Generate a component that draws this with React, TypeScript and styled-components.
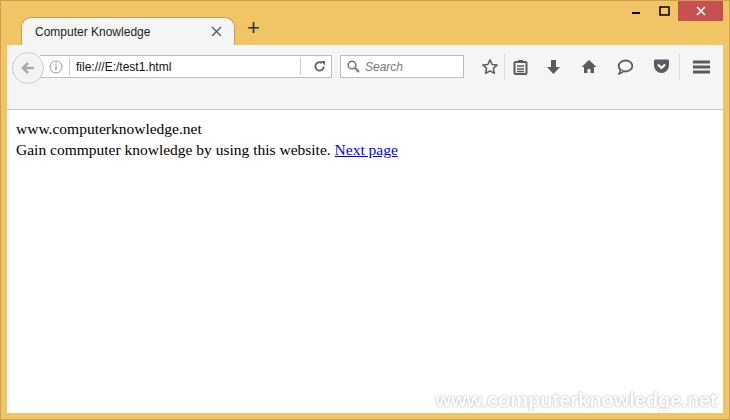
import styled, { createGlobalStyle } from 'styled-components'

const Global = createGlobalStyle`
  html, body { margin: 0; padding: 0; }
  body { width: 730px; height: 420px; overflow: hidden; font-family: "Liberation Sans", Arial, sans-serif; }
`

const Frame = styled.div`
  width: 730px;
  height: 420px;
  box-sizing: border-box;
  background: #f1c566;
  border: 1px solid #c9a250;
  display: flex;
  flex-direction: column;
  padding: 0 6px 6px 6px;
`

const TitleBar = styled.div`
  height: 44px;
  display: flex;
  align-items: flex-end;
  position: relative;
`

const Tab = styled.div`
  margin-left: 14px;
  width: 214px;
  height: 28px;
  background: #f5f5f5;
  border: 1px solid #c9a250;
  border-bottom: none;
  border-radius: 10px 10px 0 0;
  box-sizing: border-box;
  display: flex;
  align-items: center;
  padding: 0 12px 0 13px;
  font-size: 12px;
  color: #222;
`

const TabTitle = styled.span`
  flex: 1;
`

const NewTab = styled.div`
  margin: 0 0 6px 12px;
  font-size: 22px;
  line-height: 22px;
  color: #333;
`

const Controls = styled.div`
  position: absolute;
  top: 0;
  right: 0;
  display: flex;
  align-items: center;
`

const Ctl = styled.div<{ $close?: boolean }>`
  width: ${({ $close }) => ($close ? '45px' : '28px')};
  height: 20px;
  display: flex;
  align-items: center;
  justify-content: center;
  background: ${({ $close }) => ($close ? '#c75050' : 'transparent')};
  color: ${({ $close }) => ($close ? '#fff' : '#000')};
  font-size: 12px;
`

const Toolbar = styled.div`
  height: 65px;
  background: #f5f5f5;
  border-bottom: 1px solid #c8c8c8;
  display: flex;
  align-items: flex-start;
  padding: 10px 0 0 5px;
  box-sizing: border-box;
`

const Back = styled.div`
  width: 30px;
  height: 30px;
  border-radius: 50%;
  border: 1px solid #ccc;
  background: #f3f3f3;
  display: flex;
  align-items: center;
  justify-content: center;
  z-index: 1;
  margin-top: -3px;
`

const UrlBar = styled.div`
  width: 292px;
  height: 23px;
  margin-left: -4px;
  background: #fff;
  border: 1px solid #bdbdbd;
  border-left: none;
  box-sizing: border-box;
  display: flex;
  align-items: center;
  font-size: 12px;
  color: #111;
  padding-left: 9px;
`

const Divider = styled.div`
  width: 1px;
  height: 17px;
  background: #ccc;
  margin: 0 6px;
`

const Url = styled.span`
  flex: 1;
`

const Search = styled.div`
  width: 124px;
  height: 23px;
  margin-left: 8px;
  background: #fff;
  border: 1px solid #bdbdbd;
  box-sizing: border-box;
  display: flex;
  align-items: center;
  gap: 5px;
  padding-left: 6px;
  font-size: 12px;
  font-style: italic;
  color: #777;
`

const Icons = styled.div`
  display: flex;
  align-items: center;
  height: 23px;
  margin-left: 12px;
`

const Icon = styled.div<{ $w?: number }>`
  width: ${({ $w }) => $w ?? 36}px;
  display: flex;
  justify-content: center;
`

const Sep = styled.div`
  width: 1px;
  height: 26px;
  background: #ddd;
`

const Content = styled.div`
  flex: 1;
  background: #fff;
  font-family: "Liberation Serif", "Times New Roman", serif;
  font-size: 15.5px;
  line-height: 21px;
  padding: 8px 9px;
  color: #000;
  position: relative;
`

const Link = styled.a`
  color: #0000ee;
`

const Watermark = styled.div`
  position: absolute;
  right: 6px;
  bottom: 2px;
  font-family: "Liberation Sans", Arial, sans-serif;
  font-weight: bold;
  font-size: 20px;
  color: #fff;
  text-shadow: 0 0 2px #bbb, 0 0 1px #aaa;
`

const g = '#5b5b5f'

export default function App() {
  return (
    <>
      <Global />
      <Frame>
        <TitleBar>
          <Tab>
            <TabTitle>Computer Knowledge</TabTitle>
            <svg width="11" height="11" viewBox="0 0 11 11"><path d="M1 1L10 10M10 1L1 10" stroke="#555" strokeWidth="1.3" /></svg>
          </Tab>
          <NewTab>+</NewTab>
          <Controls>
            <Ctl><svg width="10" height="10"><rect x="1" y="6" width="8" height="2" fill="#000" /></svg></Ctl>
            <Ctl><svg width="11" height="10"><rect x="1" y="1" width="9" height="8" fill="none" stroke="#000" strokeWidth="1.5" /></svg></Ctl>
            <Ctl $close>
              <svg width="10" height="10"><path d="M1 1L9 9M9 1L1 9" stroke="#fff" strokeWidth="1.6" /></svg>
            </Ctl>
          </Controls>
        </TitleBar>
        <Toolbar>
          <Back>
            <svg width="16" height="16" viewBox="0 0 16 16"><path d="M14 8H4M8 3L3 8l5 5" fill="none" stroke="#aaa" strokeWidth="2.6" /></svg>
          </Back>
          <UrlBar>
            <svg width="14" height="14" viewBox="0 0 14 14"><circle cx="7" cy="7" r="6" fill="none" stroke="#999" /><rect x="6.4" y="6" width="1.3" height="4" fill="#999" /><rect x="6.4" y="3.5" width="1.3" height="1.3" fill="#999" /></svg>
            <Divider />
            <Url>file:///E:/test1.html</Url>
            <Divider />
            <Icon $w={24}>
              <svg width="13" height="13" viewBox="0 0 14 14"><path d="M11.5 7A4.5 4.5 0 1 1 9.5 3.2" fill="none" stroke="#666" strokeWidth="2" /><path d="M8 1h5v5z" fill="#666" /></svg>
            </Icon>
          </UrlBar>
          <Search>
            <svg width="13" height="13" viewBox="0 0 13 13"><circle cx="5" cy="5" r="3.8" fill="none" stroke="#777" strokeWidth="1.6" /><path d="M8 8l4 4" stroke="#777" strokeWidth="2" /></svg>
            Search
          </Search>
          <Icons>
            <Icon $w={28}>
              <svg width="18" height="18" viewBox="0 0 24 24"><path d="M12 2.5l2.9 6.2 6.6.7-5 4.5 1.4 6.6L12 17.2l-5.9 3.3 1.4-6.6-5-4.5 6.6-.7z" fill="none" stroke={g} strokeWidth="2" strokeLinejoin="round" /></svg>
            </Icon>
            <Sep />
            <Icon $w={30}>
              <svg width="15" height="16" viewBox="0 0 15 16"><rect x="1.5" y="3" width="12" height="12" rx="1" fill="none" stroke={g} strokeWidth="2" /><rect x="5" y="1" width="5" height="3" fill={g} /><path d="M4 7h7M4 10h7M4 12.5h7" stroke={g} strokeWidth="1.5" /></svg>
            </Icon>
            <Icon>
              <svg width="15" height="16" viewBox="0 0 15 16"><rect x="5" y="1" width="5" height="7" fill={g} /><path d="M1 8h13l-6.5 7z" fill={g} /></svg>
            </Icon>
            <Icon>
              <svg width="16" height="15" viewBox="0 0 16 15"><path d="M8 1L0.5 8h2.5v6h3.5v-4h3v4h3.5V8h2.5z" fill={g} /></svg>
            </Icon>
            <Icon>
              <svg width="17" height="16" viewBox="0 0 17 16"><ellipse cx="8.5" cy="7" rx="6.8" ry="5.5" fill="none" stroke={g} strokeWidth="1.8" /><path d="M3.5 11L2 15l4.5-2.5" fill="#fff" stroke={g} strokeWidth="1.5" /></svg>
            </Icon>
            <Icon>
              <svg width="17" height="15" viewBox="0 0 17 15"><path d="M1 2a1.5 1.5 0 0 1 1.5-1.5h12A1.5 1.5 0 0 1 16 2v4.5a7.5 7.5 0 0 1-15 0z" fill={g} /><path d="M5 5.5l3.5 3.5 3.5-3.5" fill="none" stroke="#fff" strokeWidth="2.2" /></svg>
            </Icon>
            <Sep />
            <Icon $w={42}>
              <svg width="17" height="14" viewBox="0 0 17 14"><path d="M0 2h17M0 7h17M0 12h17" stroke={g} strokeWidth="2.8" /></svg>
            </Icon>
          </Icons>
        </Toolbar>
        <Content>
          www.computerknowledge.net
          <br />
          Gain commputer knowledge by using this website. <Link href="#">Next page</Link>
          <Watermark>www.computerknowledge.net</Watermark>
        </Content>
      </Frame>
    </>
  )
}
